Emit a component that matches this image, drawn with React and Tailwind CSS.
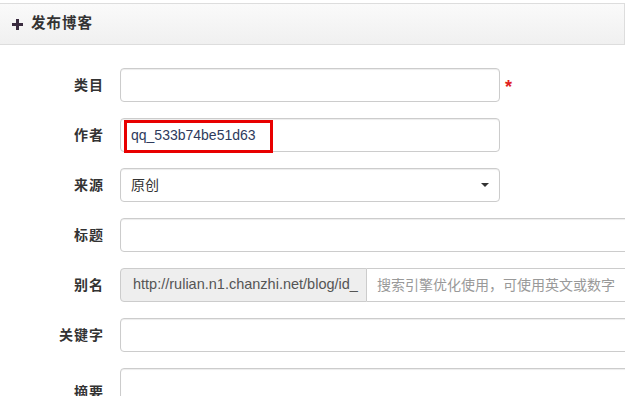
const font = { fontFamily: '"Liberation Sans", Arial, "Noto Sans CJK SC", sans-serif' };

const Label = ({ children }) => (
  <div className="w-[104px] shrink-0 text-right text-[14px] font-bold tracking-[1px] text-[#333]">{children}</div>
);

const Row = ({ label, children }) => (
  <div className="flex items-center h-[34px]">
    <Label>{label}</Label>
    <div className="ml-[16px] flex items-center">{children}</div>
  </div>
);

const inputCls = 'h-[34px] border border-[#ccc] rounded-[4px] bg-white shadow-[inset_0_1px_1px_rgba(0,0,0,0.075)]';

export default function App() {
  return (
    <div className="w-[625px] h-[396px] overflow-hidden bg-white" style={font}>
      <div className="mt-[3px] h-[42px] border-y border-r border-[#ddd] bg-gradient-to-b from-[#fafafa] to-[#f0f0f0] flex items-center pl-[12px]">
        <svg width="11" height="11" viewBox="0 0 11 11" className="mr-[8px]">
          <rect x="4" y="0" width="3" height="11" fill="#3a2c40" />
          <rect x="0" y="4" width="11" height="3" fill="#3a2c40" />
        </svg>
        <span className="text-[14.5px] font-bold tracking-[1px] text-[#333]">发布博客</span>
      </div>

      <div className="pt-[23px] flex flex-col gap-[16px] w-[900px]">
        <Row label="类目">
          <div className={`${inputCls} w-[380px]`} />
          <span className="ml-[5px] text-[18px] font-bold text-[#e02020] leading-none pt-[4px]">*</span>
        </Row>
        <Row label="作者">
          <div className={`${inputCls} w-[380px] relative flex items-center pl-[10px] text-[14px] text-[#2e3a5c]`}>
            qq_533b74be51d63
            <div className="absolute left-[3px] top-[1px] w-[149px] h-[33px] border-[3px] border-[#e80000]" />
          </div>
        </Row>
        <Row label="来源">
          <div className={`${inputCls} w-[380px] flex items-center justify-between pl-[10px] pr-[10px] text-[14px] text-[#333]`}>
            <span>原创</span>
            <svg width="8" height="4" viewBox="0 0 8 4"><path d="M0 0h8L4 4z" fill="#333" /></svg>
          </div>
        </Row>
        <Row label="标题">
          <div className={`${inputCls} w-[600px]`} />
        </Row>
        <Row label="别名">
          <div className="flex h-[34px]">
            <div className="h-full w-[247px] border border-[#ccc] rounded-l-[4px] bg-[#eee] flex items-center pl-[12px] text-[14.5px] text-[#555] whitespace-nowrap overflow-hidden">
              http://rulian.n1.chanzhi.net/blog/id_
            </div>
            <div className="h-full w-[400px] border border-l-0 border-[#ccc] flex items-center pl-[10px] text-[14px] text-[#999] whitespace-nowrap">
              搜索引擎优化使用，可使用英文或数字
            </div>
          </div>
        </Row>
        <Row label="关键字">
          <div className={`${inputCls} w-[600px]`} />
        </Row>
        <div className="flex">
          <div className="pt-[14px]"><Label>摘要</Label></div>
          <div className={`${inputCls} ml-[16px] w-[600px] h-[80px]`} />
        </div>
      </div>
    </div>
  );
}
